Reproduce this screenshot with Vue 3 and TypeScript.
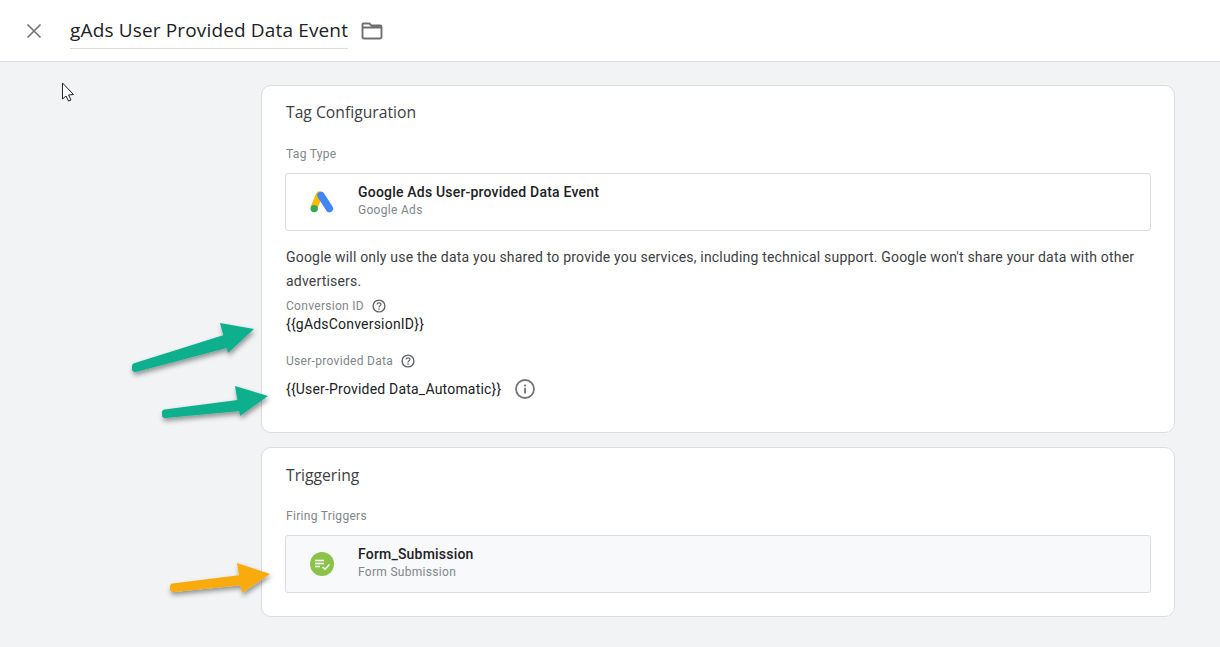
<script setup lang="ts">
const fields = [
  { label: 'Conversion ID', value: '{{gAdsConversionID}}' },
]

// annotation arrows drawn over the page, coords are page pixels
const arrows = [
  { shaft: '135,366 135,369 226,345 224,338', head: '220,323 254,329 228,353', color: '#0aaf8d' },
  { shaft: '165,412.5 165,415 240,408 238,403', head: '235,386 268,396 240,416', color: '#0aaf8d' },
  { shaft: '173,586.5 173,589 243,582 241,578', head: '237,563 270,574 242,593', color: '#f9ab0b' },
]
</script>

<template>
  <div class="page">
    <header class="topbar">
      <button class="close" aria-label="Close">
        <svg width="16" height="16" viewBox="0 0 16 16"><path d="M1.5 1.5 L14.5 14.5 M14.5 1.5 L1.5 14.5" stroke="#757575" stroke-width="1.7" fill="none" /></svg>
      </button>
      <div class="title">gAds User Provided Data Event</div>
      <svg class="folder" width="22" height="18" viewBox="0 0 22 18"><path d="M2.6 1.5 H8.4 L10.4 3.5 H19 Q20.5 3.5 20.5 5 V15 Q20.5 16.5 19 16.5 H3 Q1.5 16.5 1.5 15 V2.6 Q1.5 1.5 2.6 1.5 Z M1.5 5.5 H20.5" stroke="#6f6f6f" stroke-width="1.9" fill="none" /></svg>
    </header>

    <main class="content">
      <section class="card config">
        <h2>Tag Configuration</h2>
        <div class="label">Tag Type</div>
        <div class="chip">
          <div class="chip-icon">
            <svg width="24" height="22" viewBox="0 0 24 22">
              <path d="M9.4 4 L4.4 15.6" stroke="#fbbc04" stroke-width="7" stroke-linecap="round" />
              <path d="M11 4.4 L19.4 17.6" stroke="#4285f4" stroke-width="7.4" stroke-linecap="round" />
              <circle cx="4.2" cy="17.6" r="3.7" fill="#34a853" />
            </svg>
          </div>
          <div class="chip-text">
            <div class="chip-name">Google Ads User-provided Data Event</div>
            <div class="chip-sub">Google Ads</div>
          </div>
        </div>
        <p class="note">Google will only use the data you shared to provide you services, including technical support. Google won't share your data with other advertisers.</p>
        <div v-for="f in fields" :key="f.label">
          <div class="label with-help">{{ f.label }}
            <svg width="14" height="14" viewBox="0 0 14 14"><circle cx="7" cy="7" r="5.9" stroke="#5f6368" stroke-width="1.4" fill="none" /><path d="M5.1 5.6 C5.1 3.2 8.9 3.2 8.9 5.5 C8.9 6.9 7 6.8 7 8.4" stroke="#5f6368" stroke-width="1.2" fill="none" /><circle cx="7" cy="10.1" r=".8" fill="#5f6368" /></svg>
          </div>
          <div class="value">{{ f.value }}</div>
        </div>
        <div class="label with-help second">User-provided Data
          <svg width="14" height="14" viewBox="0 0 14 14"><circle cx="7" cy="7" r="5.9" stroke="#5f6368" stroke-width="1.4" fill="none" /><path d="M5.1 5.6 C5.1 3.2 8.9 3.2 8.9 5.5 C8.9 6.9 7 6.8 7 8.4" stroke="#5f6368" stroke-width="1.2" fill="none" /><circle cx="7" cy="10.1" r=".8" fill="#5f6368" /></svg>
        </div>
        <div class="value data-row">
          <span v-text="'{{User-Provided Data_Automatic}}'"></span>
          <svg width="20" height="20" viewBox="0 0 20 20"><circle cx="10" cy="10" r="9" stroke="#757575" stroke-width="1.8" fill="none" /><rect x="9.1" y="8.8" width="1.9" height="5.6" fill="#757575" /><rect x="9.1" y="5.6" width="1.9" height="1.9" fill="#757575" /></svg>
        </div>
      </section>

      <section class="card trigger">
        <h2>Triggering</h2>
        <div class="label">Firing Triggers</div>
        <div class="chip grey">
          <div class="chip-icon">
            <svg width="24" height="24" viewBox="0 0 24 24">
              <circle cx="12" cy="12" r="12" fill="#8bc34a" />
              <path d="M5 8.5 H14 M5 11.5 H14 M5 14.5 H10" stroke="#fff" stroke-width="1.4" fill="none" />
              <path d="M12.6 15 L15 17.2 L19.4 12.6" stroke="#fff" stroke-width="1.5" fill="none" />
            </svg>
          </div>
          <div class="chip-text">
            <div class="chip-name">Form_Submission</div>
            <div class="chip-sub">Form Submission</div>
          </div>
        </div>
      </section>
    </main>

    <svg class="overlay" width="1220" height="647" viewBox="0 0 1220 647">
      <defs>
        <filter id="shade" x="-20%" y="-40%" width="140%" height="200%">
          <feDropShadow dx="1" dy="3" stdDeviation="2.5" flood-color="#000" flood-opacity=".4" />
        </filter>
      </defs>
      <g v-for="a in arrows" :key="a.head" filter="url(#shade)">
        <polygon :points="a.shaft" :fill="a.color" :stroke="a.color" stroke-width="6" stroke-linejoin="round" />
        <polygon :points="a.head" :fill="a.color" />
      </g>
      <path d="M62.5 83 V99 L66 96 L68.5 101 L71 100 L68.6 95 L73.5 94.5 Z" fill="#fff" stroke="#222" stroke-width="1" />
    </svg>
  </div>
</template>

<style scoped>
.page {
  position: relative;
  width: 1220px;
  height: 647px;
  overflow: hidden;
  background: #f1f3f4;
  font-family: Roboto, "Liberation Sans", sans-serif;
  color: #202124;
}

.topbar {
  height: 61px;
  background: #fff;
  border-bottom: 1px solid #dadce0;
  display: flex;
  align-items: center;
}

.close {
  width: 16px;
  height: 16px;
  margin-left: 26px;
  padding: 0;
  border: 0;
  background: none;
  display: flex;
}

.title {
  margin-left: 28px;
  width: 278px;
  height: 34px;
  line-height: 32px;
  margin-top: 2px;
  font-family: "Open Sans", sans-serif;
  font-size: 19px;
  letter-spacing: .15px;
  white-space: nowrap;
  color: #202124;
  border-bottom: 1px solid #dadce0;
}

.folder {
  margin-left: 13px;
}

.content {
  width: 914px;
  margin: 23px 0 0 261px;
  display: flex;
  flex-direction: column;
  gap: 14px;
}

.card {
  box-sizing: border-box;
  background: #fff;
  border: 1px solid #dadce0;
  border-radius: 10px;
  padding: 0 24px;
}

.config {
  height: 348px;
}

.trigger {
  height: 170px;
}

h2 {
  margin: 17px 0 0;
  font-family: "Open Sans", sans-serif;
  font-size: 15.7px;
  line-height: 20px;
  font-weight: 400;
  color: #3c4043;
}

.config h2 {
  margin-top: 16px;
}

.label {
  font-size: 12px;
  line-height: 16px;
  letter-spacing: .3px;
  color: #80868b;
  margin-top: 23px;
}

.config .label:not(.with-help) {
  margin-top: 24px;
}

.chip {
  box-sizing: border-box;
  height: 58px;
  margin: 11px -1px 0;
  border: 1px solid #dadce0;
  border-radius: 3px;
  display: flex;
  align-items: center;
}

.chip.grey {
  background: #f8f9fa;
}

.chip-icon {
  width: 72px;
  display: flex;
  justify-content: center;
}

.chip-text {
  padding-bottom: 2px;
}

.chip-name {
  font-size: 14px;
  line-height: 18px;
  font-weight: 500;
  letter-spacing: .2px;
  color: #202124;
}

.chip-sub {
  font-size: 12px;
  line-height: 18px;
  letter-spacing: .3px;
  color: #80868b;
}

.note {
  margin: 14px 0 0;
  font-size: 14px;
  line-height: 24px;
  letter-spacing: .19px;
  color: #3c4043;
}

.with-help {
  display: flex;
  align-items: center;
  gap: 8px;
  margin-top: 5px;
}

.with-help.second {
  margin-top: 19px;
}

.value {
  font-size: 14px;
  line-height: 20px;
  letter-spacing: .2px;
  color: #202124;
  margin-top: 0;
}

.data-row {
  display: flex;
  align-items: center;
  gap: 14px;
  margin-top: 10px;
}

.overlay {
  position: absolute;
  left: 0;
  top: 0;
  pointer-events: none;
}
</style>
